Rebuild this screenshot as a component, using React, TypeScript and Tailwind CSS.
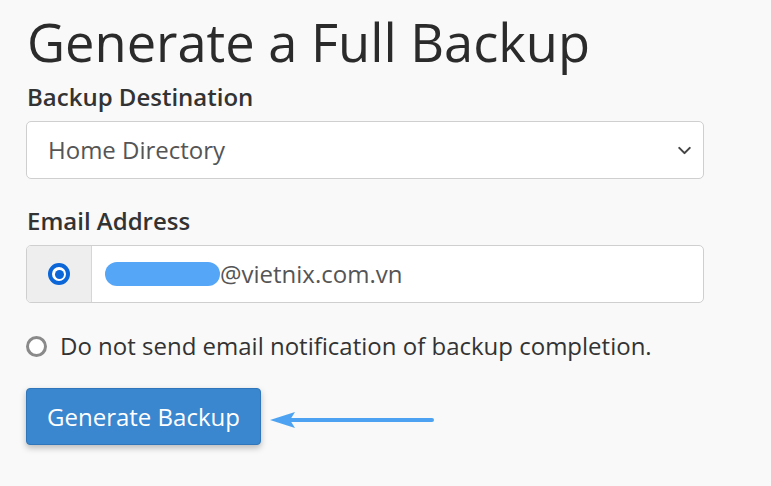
import { ChevronDown } from "lucide-react";

const font = { fontFamily: '"Open Sans", "Noto Sans", sans-serif' };

export default function App() {
  return (
    <div
      className="w-[771px] h-[486px] overflow-hidden bg-[#f9f9f9] text-[#333] pl-[26px] pr-[67px]"
      style={font}
    >
      {/* Title */}
      <h1 className="text-[52.4px] leading-[60px] pt-[12px] pl-[1px] font-normal text-[#2b2b2b]">
        Generate a Full Backup
      </h1>

      {/* Backup destination */}
      <label className="block mt-[11px] pl-[1px] text-[24px] leading-[28px] font-semibold text-[#333]">
        Backup Destination
      </label>
      <div className="mt-[10px] h-[58px] flex items-center justify-between bg-white border border-[#cfcfcf] rounded-[5px] pl-[21px] pr-[8px]">
        <span className="text-[24px] text-[#555]">Home Directory</span>
        <ChevronDown size={21} strokeWidth={2.4} className="text-[#444]" />
      </div>

      {/* Email */}
      <label className="block mt-[28px] pl-[1px] text-[24px] leading-[28px] font-semibold text-[#333]">
        Email Address
      </label>
      <div className="mt-[10px] h-[58px] flex bg-white border border-[#cfcfcf] rounded-[5px] overflow-hidden">
        <div className="w-[65px] shrink-0 bg-[#eeeeee] border-r border-[#d6d6d6] flex items-center justify-center">
          <span className="w-[22px] h-[22px] rounded-full border-[4px] border-[#0b66d8] flex items-center justify-center bg-white">
            <span className="w-[9px] h-[9px] rounded-full bg-[#0b66d8]" />
          </span>
        </div>
        <div className="flex items-center pl-[13px]">
          <span className="w-[115px] h-[24px] rounded-full bg-[#56a6f7]" />
          <span className="text-[24px] text-[#555]">@vietnix.com.vn</span>
        </div>
      </div>

      {/* No email option */}
      <div className="mt-[28px] flex items-center gap-[13px]">
        <span className="w-[21px] h-[21px] rounded-full border-[3px] border-[#8a8a8a] bg-white shrink-0" />
        <span className="text-[24px] leading-[30px] text-[#333]">
          Do not send email notification of backup completion.
        </span>
      </div>

      {/* Button + arrow */}
      <div className="mt-[27px] flex items-center">
        <button className="h-[57px] w-[235px] bg-[#3a87cf] border border-[#2f76ba] rounded-[4px] text-white text-[24px] shadow-[0_3px_6px_rgba(0,0,0,0.25)]">
          Generate Backup
        </button>
        <svg width="170" height="20" viewBox="0 0 170 20" className="ml-[9px] mt-[6px]">
          <line x1="20" y1="10" x2="162" y2="10" stroke="#4da3f1" strokeWidth="4" strokeLinecap="round" />
          <polygon points="0,10 25,2 20,10 25,18" fill="#4da3f1" />
        </svg>
      </div>
    </div>
  );
}
